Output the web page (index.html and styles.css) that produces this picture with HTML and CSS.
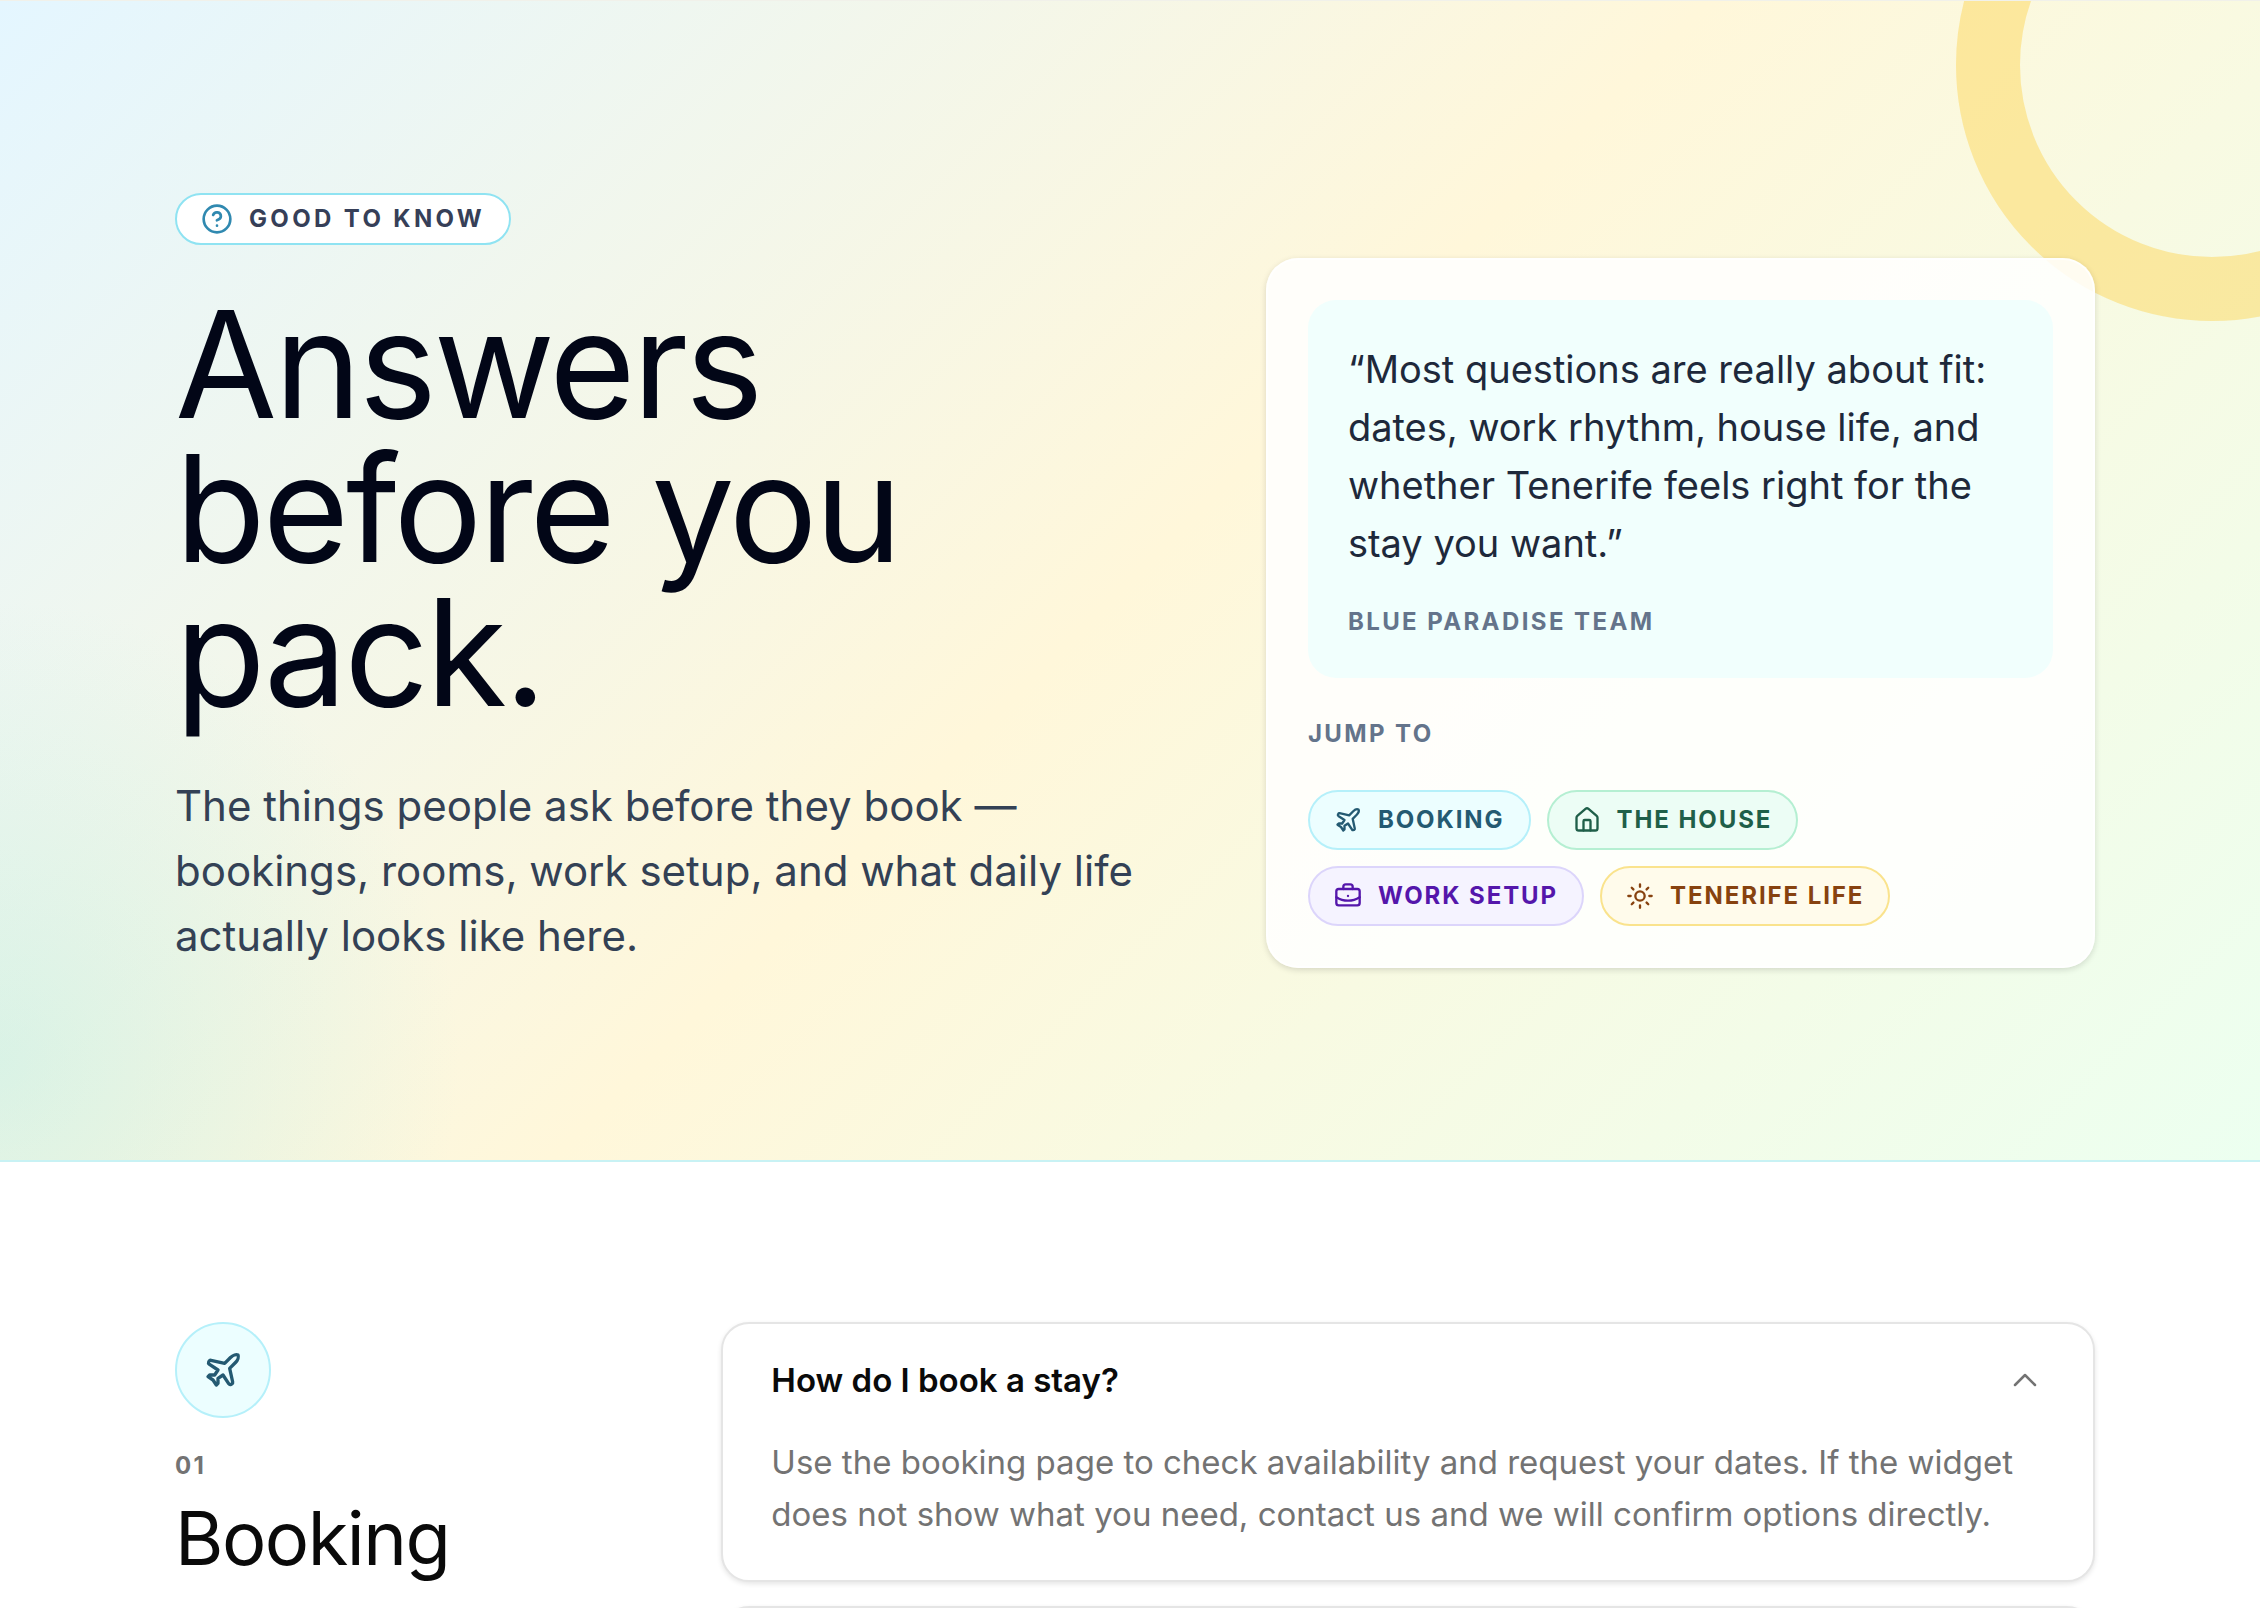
FILE: index.html
```
<!doctype html>
<html lang="en">
<head>
  <meta charset="utf-8">
  <meta name="viewport" content="width=device-width, initial-scale=1">
  <title>Good to know - Blue Paradise</title>
  <link rel="stylesheet" href="styles.css">
</head>
<body>
  <svg class="sprite" aria-hidden="true">
    <symbol id="plane" viewBox="0 0 24 24">
      <path d="M17.8 19.2 16 11l3.5-3.5C21 6 21.5 4 21 3c-1-.5-3 0-4.5 1.5L13 8 4.8 6.2c-.5-.1-.9.1-1.1.5l-.3.5c-.2.5-.1 1 .3 1.3L9 12l-2 3H4l-1 1 3 2 2 3 1-1v-3l3-2 3.5 5.3c.3.4.8.5 1.3.3l.5-.2c.4-.3.6-.7.5-1.2z"/>
    </symbol>
    <symbol id="house" viewBox="0 0 24 24">
      <path d="M15 21v-8a1 1 0 0 0-1-1h-4a1 1 0 0 0-1 1v8"/>
      <path d="M3 10a2 2 0 0 1 .709-1.528l7-5.999a2 2 0 0 1 2.582 0l7 5.999A2 2 0 0 1 21 10v9a2 2 0 0 1-2 2H5a2 2 0 0 1-2-2z"/>
    </symbol>
    <symbol id="briefcase" viewBox="0 0 24 24">
      <path d="M12 12h.01"/>
      <path d="M16 6V4a2 2 0 0 0-2-2h-4a2 2 0 0 0-2 2v2"/>
      <path d="M22 13a18.15 18.15 0 0 1-20 0"/>
      <rect width="20" height="14" x="2" y="6" rx="2"/>
    </symbol>
    <symbol id="sun" viewBox="0 0 24 24">
      <circle cx="12" cy="12" r="4"/>
      <path d="M12 2v2M12 20v2M4.93 4.93l1.41 1.41M17.66 17.66l1.41 1.41M2 12h2M20 12h2M6.34 17.66l-1.41 1.41M19.07 4.93l-1.41 1.41"/>
    </symbol>
    <symbol id="help" viewBox="0 0 24 24">
      <circle cx="12" cy="12" r="10"/>
      <path d="M9.09 9a3 3 0 0 1 5.83 1c0 2-3 3-3 3M12 17h.01"/>
    </symbol>
    <symbol id="chevron" viewBox="0 0 24 24">
      <path d="m18 15-6-6-6 6"/>
    </symbol>
  </svg>

  <header class="hero">
    <div class="ring"></div>
    <div class="container hero-grid">
      <div class="intro">
        <p class="badge"><svg class="icon"><use href="#help"/></svg>Good to know</p>
        <h1>Answers before you pack.</h1>
        <p class="lead">The things people ask before they book — bookings, rooms, work setup, and what daily life actually looks like here.</p>
      </div>
      <aside class="panel">
        <figure class="quote">
          <blockquote>“Most questions are really about fit: dates, work rhythm, house life, and whether Tenerife feels right for the stay you want.”</blockquote>
          <figcaption class="label">Blue Paradise team</figcaption>
        </figure>
        <p class="label">Jump to</p>
        <nav class="chips">
          <a class="chip cyan" href="#booking"><svg class="icon"><use href="#plane"/></svg>Booking</a>
          <a class="chip green" href="#the-house"><svg class="icon"><use href="#house"/></svg>The house</a>
          <a class="chip violet" href="#work-setup"><svg class="icon"><use href="#briefcase"/></svg>Work setup</a>
          <a class="chip amber" href="#tenerife-life"><svg class="icon"><use href="#sun"/></svg>Tenerife life</a>
        </nav>
      </aside>
    </div>
  </header>

  <main>
    <section class="container topic" id="booking">
      <div class="topic-head">
        <div class="topic-icon"><svg class="icon"><use href="#plane"/></svg></div>
        <p class="label number">01</p>
        <h2>Booking</h2>
      </div>
      <div class="questions">
        <article class="card">
          <h3><button class="question" type="button" aria-expanded="true" aria-controls="answer-1">How do I book a stay?<svg class="icon"><use href="#chevron"/></svg></button></h3>
          <p class="answer" id="answer-1">Use the booking page to check availability and request your dates. If the widget does not show what you need, contact us and we will confirm options directly.</p>
        </article>
        <article class="card"></article>
      </div>
    </section>
  </main>
</body>
</html>
```
FILE: styles.css
```
* {
  box-sizing: border-box;
}
body {
  margin: 0;
  background: #fff;
  color: #0a0a0a;
  font-family: Inter, "Liberation Sans", sans-serif;
}
h1, h2, h3, p, figure, blockquote {
  margin: 0;
}
.sprite {
  display: none;
}
.icon {
  flex: none;
  width: 28px;
  height: 28px;
  fill: none;
  stroke: currentColor;
  stroke-width: 2;
  stroke-linecap: round;
  stroke-linejoin: round;
}
.container {
  padding-left: 175px;
  padding-right: 165px;
}
.label {
  color: #64748b;
  font-size: 24px;
  font-weight: 700;
  line-height: 32px;
  letter-spacing: 0.1em;
  text-transform: uppercase;
}

/* hero */
.hero {
  position: relative;
  overflow: hidden;
  padding: 192px 0;
  border-top: 1px solid #f1f1ea;
  border-bottom: 2px solid #c8f2f4;
  background:
    radial-gradient(circle at 0 1060px, rgba(167, 235, 225, 0.35), transparent 460px),
    linear-gradient(135deg, #e4f6ff, #fff7da 50%, #ecfff0);
}
.ring {
  position: absolute;
  top: -192px;
  right: -208px;
  width: 512px;
  height: 512px;
  border: 64px solid rgba(252, 211, 77, 0.45);
  border-radius: 50%;
}
.hero-grid {
  position: relative;
  display: grid;
  grid-template-columns: 1.2fr 1fr;
  gap: 96px;
  align-items: end;
}
.badge {
  display: inline-flex;
  align-items: center;
  gap: 16px;
  padding: 8px 24px;
  border: 2px solid #8fe3f2;
  border-radius: 26px;
  background: #fff;
  color: #363f58;
  font-size: 24px;
  font-weight: 700;
  line-height: 32px;
  letter-spacing: 0.14em;
  text-transform: uppercase;
}
.badge .icon {
  width: 32px;
  height: 32px;
  color: #3089b0;
}
h1 {
  margin-top: 48px;
  color: #020617;
  font-size: 148px;
  font-weight: 400;
  line-height: 144px;
  letter-spacing: -0.02em;
}
.lead {
  margin-top: 48px;
  color: #334155;
  font-size: 42px;
  line-height: 65px;
}
.panel {
  padding: 40px;
  border: 2px solid rgba(255, 255, 255, 0.8);
  border-radius: 32px;
  background: rgba(255, 255, 255, 0.85);
  box-shadow: 0 2px 6px rgba(0, 0, 0, 0.14);
}
.quote {
  margin-bottom: 40px;
  padding: 40px;
  border-radius: 28px;
  background: #f1fffd;
}
blockquote {
  margin-bottom: 34px;
  color: #1e293b;
  font-size: 38px;
  line-height: 58px;
}
.chips {
  display: flex;
  flex-wrap: wrap;
  gap: 16px;
  margin-top: 40px;
}
.chip {
  display: flex;
  align-items: center;
  gap: 16px;
  padding: 12px 24px;
  border: 2px solid;
  border-radius: 30px;
  font-size: 24px;
  font-weight: 700;
  line-height: 32px;
  letter-spacing: 0.08em;
  text-decoration: none;
  text-transform: uppercase;
}
.cyan {
  border-color: #b5f0fa;
  background: #ecfeff;
  color: #245a72;
}
.green {
  border-color: #b5efd2;
  background: #ecfdf5;
  color: #1f5f49;
}
.violet {
  border-color: #dcd5fb;
  background: #f5f3ff;
  color: #5416ab;
}
.amber {
  border-color: #fae38d;
  background: #fffbeb;
  color: #87420f;
}

/* topics */
.topic {
  display: grid;
  grid-template-columns: 1fr 3.05fr;
  gap: 96px;
  padding-top: 160px;
}
.topic-icon {
  display: flex;
  align-items: center;
  justify-content: center;
  width: 96px;
  height: 96px;
  border: 2px solid #b5f0fa;
  border-radius: 50%;
  background: #ecfeff;
  color: #245a72;
}
.topic-icon .icon {
  width: 40px;
  height: 40px;
}
.number {
  margin-top: 32px;
  color: #737373;
}
h2 {
  margin-top: 16px;
  font-size: 74px;
  font-weight: 400;
  line-height: 80px;
  letter-spacing: -0.02em;
}
.questions {
  display: flex;
  flex-direction: column;
  gap: 24px;
}
.card {
  min-height: 120px;
  padding: 32px 48px 40px;
  border: 2px solid #e5e5e5;
  border-radius: 28px;
  background: #fff;
  box-shadow: 0 2px 5px rgba(0, 0, 0, 0.1);
}
.question {
  display: flex;
  align-items: center;
  justify-content: space-between;
  width: 100%;
  padding: 0;
  border: 0;
  background: none;
  color: inherit;
  font: inherit;
  font-size: 33px;
  font-weight: 600;
  line-height: 48px;
  text-align: left;
}
.question .icon {
  width: 40px;
  height: 40px;
  color: #737373;
  stroke-width: 1.5;
}
.answer {
  margin-top: 32px;
  color: #737373;
  font-size: 33px;
  line-height: 52px;
}
```
